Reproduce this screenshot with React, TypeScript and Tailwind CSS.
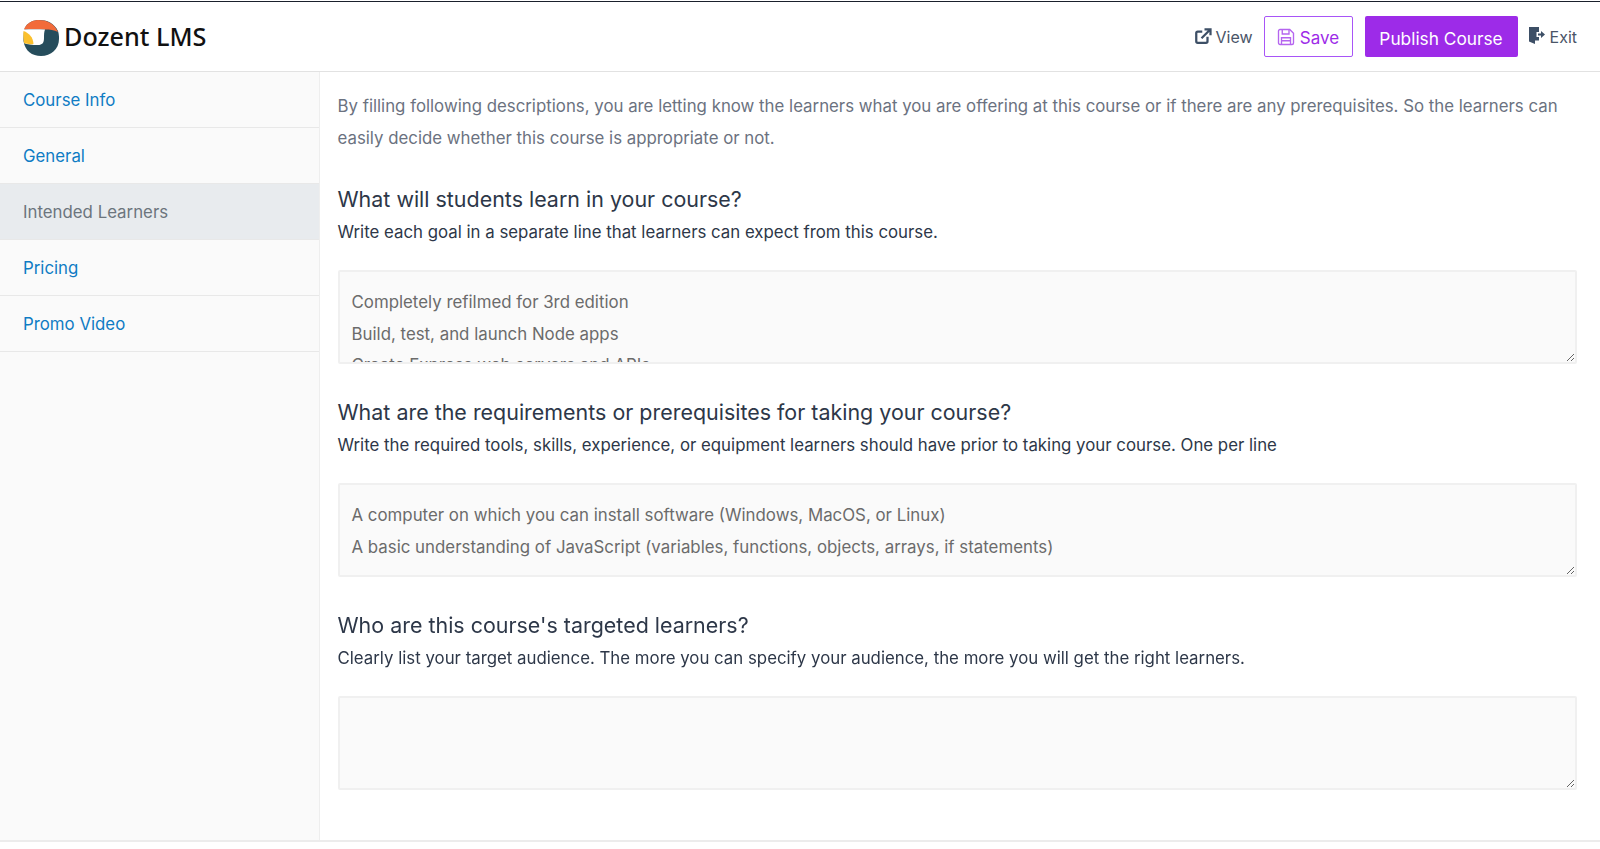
import React from "react";

const nav = ["Course Info", "General", "Intended Learners", "Pricing", "Promo Video"];

function Logo() {
  return (
    <svg width="36" height="36" viewBox="0 0 36 36" className="shrink-0 mt-[2px]">
      <path d="M0.5 21 C0.5 13 1 9 3 6 C6 2 11 0 16 0 C24 0 31 3 35 11 C36 14 36 17 36 19 C36 29 28 36 18 36 C9 36 2 31 0.5 21 Z" fill="#264d5c" />
      <path d="M1 9.5 C3 4 9 0 15 0 C24 0 31 3 35 12 C31 10 27 9.5 22 9.5 C15 9 7 9 1 9.5 Z" fill="#f26b3a" />
      <path d="M1 9.5 C7 9 15 9 22 9.5 C21 12 21 15 21 18 C21 23 19 25 15 25 C9 25 4 24.5 1 23 Z" fill="#ffffff" />
      <path d="M0.5 11 C6 13 10 17 10.5 24 C7 24.5 3 24 1 23 C0.5 19 0 15 0.5 11 Z" fill="#fbc02d" />
    </svg>
  );
}

function Section({ title, desc, value }: { title: string; desc: string; value: string }) {
  return (
    <section className="mb-[32px]">
      <h2 className="text-[21.45px] leading-[32px] text-[#2d3748] font-normal">{title}</h2>
      <p className="text-[16.82px] leading-[35px] text-[#2d3748] mb-[20px]">{desc}</p>
      <textarea
        readOnly
        value={value}
        className="block w-full h-[94px] bg-[#fafafa] border-2 border-[#f0f0f0] rounded-[2px] px-[12px] pt-[15px] pb-[13px] text-[16.85px] leading-[31.5px] text-[#6b6b6b] outline-none"
      />
    </section>
  );
}

export default function App() {
  return (
    <div className="h-[849px] overflow-hidden bg-white flex flex-col font-['Inter',sans-serif] pt-px">
      <header className="h-[71px] shrink-0 border-t border-t-[#1a202c] border-b border-b-[#e2e2e2] flex items-center justify-between pl-[23px] pr-[23px]">
        <div className="flex items-center gap-[5px]">
          <Logo />
          <span className="font-['Noto_Sans',sans-serif] text-[25.2px] font-medium text-[#111]">Dozent LMS</span>
        </div>
        <div className="flex items-center">
          <a className="flex items-center gap-[3px] text-[16px] text-[#4a5568] mr-[11px]">
            <svg width="18" height="18" viewBox="0 0 24 24" fill="none" stroke="#3d4f66" strokeWidth="3" className="mb-[2px]">
              <path d="M18 13v6a2 2 0 0 1-2 2H5a2 2 0 0 1-2-2V8a2 2 0 0 1 2-2h6" />
              <path d="M14 3h8v8M22 3 10 15" />
            </svg>
            View
          </a>
          <button className="h-[41px] w-[89px] flex items-center justify-center gap-[5px] border-[1.5px] border-[#a855f7] rounded-[2px] text-[#9d2be8] text-[17px] mr-[12px]">
            <svg width="18" height="18" viewBox="0 0 24 24" fill="none" stroke="#b565ef" strokeWidth="1.8">
              <path d="M4 2h13l5 5v13a2 2 0 0 1-2 2H4a2 2 0 0 1-2-2V4a2 2 0 0 1 2-2Z" />
              <path d="M7 2v6h9V2M6 22v-9h12v9M6 17h12" />
            </svg>
            <span className="relative top-[2px]">Save</span>
          </button>
          <button className="h-[41px] w-[153px] bg-[#9d2be8] rounded-[2px] text-white text-[17.3px] mr-[11px]">
            <span className="relative top-[2px]">Publish Course</span>
          </button>
          <a className="flex items-center gap-[5px] text-[16px] text-[#4a5568]">
            <svg width="16" height="18" viewBox="0 0 16 18" className="mb-[4px]">
              <path d="M0 1h10v5H7.5v5H10v3.5H6V18L0 15.5Z" fill="#3d4f66" />
              <path d="M9 7.5h3V5l4 3.5-4 3.5V9.5H9Z" fill="#3d4f66" />
            </svg>
            Exit
          </a>
        </div>
      </header>
      <div className="h-[770px] shrink-0 flex border-b-2 border-[#ececec]">
        <aside className="w-[320px] shrink-0 bg-[#fafafa] border-r border-[#eeeeee]">
          {nav.map((n) => (
            <div
              key={n}
              className={
                "h-[56px] flex items-center pl-[23px] pt-[2px] text-[16.82px] border-b border-[#e8e8e8] " +
                (n === "Intended Learners" ? "bg-[#e8ebee] text-[#6c757d]" : "text-[#0f7cc4]")
              }
            >
              {n}
            </div>
          ))}
        </aside>
        <main className="flex-1 pl-[17.5px] pr-[23px] pt-[19px]">
          <p className="text-[16.82px] leading-[31.5px] text-[#6b7280] mb-[29px]">
            By filling following descriptions, you are letting know the learners what you are offering at this course or if there are any prerequisites. So the learners can easily decide whether this course is appropriate or not.
          </p>
          <Section
            title="What will students learn in your course?"
            desc="Write each goal in a separate line that learners can expect from this course."
            value={"Completely refilmed for 3rd edition\nBuild, test, and launch Node apps\nCreate Express web servers and APIs"}
          />
          <Section
            title="What are the requirements or prerequisites for taking your course?"
            desc="Write the required tools, skills, experience, or equipment learners should have prior to taking your course. One per line"
            value={"A computer on which you can install software (Windows, MacOS, or Linux)\nA basic understanding of JavaScript (variables, functions, objects, arrays, if statements)"}
          />
          <Section
            title="Who are this course's targeted learners?"
            desc="Clearly list your target audience. The more you can specify your audience, the more you will get the right learners."
            value=""
          />
        </main>
      </div>
    </div>
  );
}
